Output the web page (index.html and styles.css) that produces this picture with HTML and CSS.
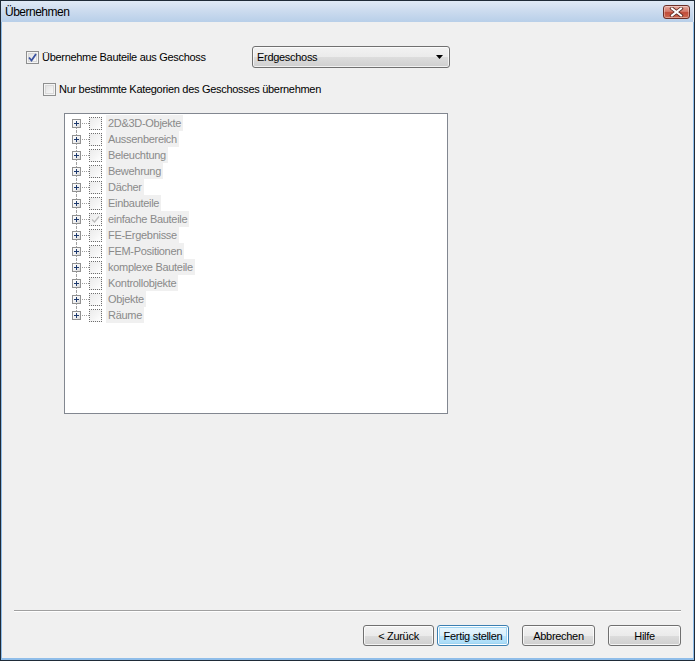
FILE: index.html
```html
<!DOCTYPE html>
<html>
<head>
<meta charset="utf-8">
<link rel="stylesheet" href="styles.css">
</head>
<body>
<div class="window">
  <div class="titlebar">
    <span class="title">Übernehmen</span>
    <div class="close">
      <svg width="15" height="10" viewBox="0 0 15 10"><path d="M3 1.5 L12 8.5 M12 1.5 L3 8.5" stroke="#5b2a24" stroke-width="3.6" stroke-linecap="square"/><path d="M3 1.5 L12 8.5 M12 1.5 L3 8.5" stroke="#ffffff" stroke-width="2" stroke-linecap="square"/></svg>
    </div>
  </div>
  <div class="content">
    <div class="row row1">
      <label class="chk-label">
        <span class="chk checked">
          <svg width="9" height="9" viewBox="0 0 9 9"><path d="M1 4.5 L3.5 7.5 L8 1" fill="none" stroke="#3a52a0" stroke-width="1.8"/></svg>
        </span>
        <span>Übernehme Bauteile aus Geschoss</span>
      </label>
      <div class="combo">
        <span class="combo-text">Erdgeschoss</span>
        <svg class="combo-arrow" width="7" height="4" viewBox="0 0 7 4"><path d="M0 0 H7 L3.5 4 Z" fill="#000"/></svg>
      </div>
    </div>
    <div class="row row2">
      <label class="chk-label">
        <span class="chk"></span>
        <span>Nur bestimmte Kategorien des Geschosses übernehmen</span>
      </label>
    </div>
    <div class="tree">
      <div class="node first"><span class="twig"><span class="exp"></span></span><span class="tcb"></span><span class="tlabel">2D&amp;3D-Objekte</span></div>
      <div class="node"><span class="twig"><span class="exp"></span></span><span class="tcb"></span><span class="tlabel">Aussenbereich</span></div>
      <div class="node"><span class="twig"><span class="exp"></span></span><span class="tcb"></span><span class="tlabel">Beleuchtung</span></div>
      <div class="node"><span class="twig"><span class="exp"></span></span><span class="tcb"></span><span class="tlabel">Bewehrung</span></div>
      <div class="node"><span class="twig"><span class="exp"></span></span><span class="tcb"></span><span class="tlabel">Dächer</span></div>
      <div class="node"><span class="twig"><span class="exp"></span></span><span class="tcb"></span><span class="tlabel">Einbauteile</span></div>
      <div class="node"><span class="twig"><span class="exp"></span></span><span class="tcb"><svg width="9" height="9" viewBox="0 0 9 9"><path d="M1 4.5 L3.5 7 L8 1.5" fill="none" stroke="#bcbcbc" stroke-width="1.2"/></svg></span><span class="tlabel">einfache Bauteile</span></div>
      <div class="node"><span class="twig"><span class="exp"></span></span><span class="tcb"></span><span class="tlabel">FE-Ergebnisse</span></div>
      <div class="node"><span class="twig"><span class="exp"></span></span><span class="tcb"></span><span class="tlabel">FEM-Positionen</span></div>
      <div class="node"><span class="twig"><span class="exp"></span></span><span class="tcb"></span><span class="tlabel">komplexe Bauteile</span></div>
      <div class="node"><span class="twig"><span class="exp"></span></span><span class="tcb"></span><span class="tlabel">Kontrollobjekte</span></div>
      <div class="node"><span class="twig"><span class="exp"></span></span><span class="tcb"></span><span class="tlabel">Objekte</span></div>
      <div class="node last"><span class="twig"><span class="exp"></span></span><span class="tcb"></span><span class="tlabel">Räume</span></div>
    </div>
    <div class="spacer"></div>
    <div class="separator"></div>
    <div class="buttons">
      <button class="btn btn-back">&lt; Zurück</button>
      <button class="btn btn-finish focused">Fertig stellen</button>
      <button class="btn gap">Abbrechen</button>
      <button class="btn gap">Hilfe</button>
    </div>
  </div>
</div>
</body>
</html>
```

FILE: styles.css
```css
html, body {
  margin: 0;
  padding: 0;
}
body {
  width: 695px;
  height: 661px;
  overflow: hidden;
  font-family: "Liberation Sans", Arial, sans-serif;
  font-size: 11px;
  letter-spacing: -0.3px;
  color: #000;
}
.window {
  box-sizing: border-box;
  width: 695px;
  height: 661px;
  border: 1px solid #1f2b38;
  background: #f0f0f0;
  display: flex;
  flex-direction: column;
}
.titlebar {
  height: 21px;
  flex: none;
  background: linear-gradient(to bottom, #e0eaf6 0%, #cddcef 45%, #b8cfe9 100%);
  display: flex;
  align-items: center;
  justify-content: space-between;
  padding: 0 3px 0 4px;
  border-right: 1px solid #dbe6f3;
}
.title {
  font-size: 12px;
  letter-spacing: -0.5px;
  color: #000;
  margin-top: 1px;
}
.close {
  box-sizing: border-box;
  width: 27px;
  height: 14px;
  margin-top: 1px;
  border: 1px solid #6b2f28;
  border-radius: 3px;
  background: linear-gradient(to bottom, #e7a99e 0%, #d37a6b 45%, #c04b38 55%, #cf6a52 100%);
  box-shadow: inset 0 0 0 1px rgba(255,255,255,0.35);
  display: flex;
  align-items: center;
  justify-content: center;
}
.close svg { display: block; }
.content {
  flex: 1;
  display: flex;
  flex-direction: column;
  border-left: 1px solid #8fbde9;
  border-right: 1px solid #8fbde9;
  border-bottom: 2px solid #8fbde9;
  min-height: 0;
}
.row {
  display: flex;
  align-items: center;
}
.row1 {
  margin-top: 24px;
  height: 22px;
  padding-left: 24px;
}
.row2 {
  margin-top: 13px;
  height: 16px;
  padding-left: 41px;
}
.chk-label {
  display: flex;
  align-items: center;
  gap: 3px;
}
.chk {
  box-sizing: border-box;
  width: 13px;
  height: 13px;
  border: 1px solid #8e8f8f;
  background: linear-gradient(135deg, #dcdcdc 0%, #f4f4f4 70%, #ffffff 100%);
  box-shadow: inset 0 0 0 1px #f4f4f4, inset 0 0 0 2px #d9d9d9;
  display: flex;
  align-items: center;
  justify-content: center;
}
.chk svg { display: block; }
.row1 .chk-label { width: 226px; }
.combo {
  box-sizing: border-box;
  width: 198px;
  height: 22px;
  border: 1px solid #707070;
  border-radius: 3px;
  background: linear-gradient(to bottom, #f2f2f2 0%, #ebebeb 50%, #dddddd 50%, #cfcfcf 100%);
  box-shadow: inset 0 0 0 1px rgba(255,255,255,0.7);
  display: flex;
  align-items: center;
  justify-content: space-between;
  padding: 0 6px 0 4px;
}
.combo-arrow { display: block; }
.tree {
  box-sizing: border-box;
  margin-top: 16px;
  margin-left: 62px;
  width: 384px;
  height: 301px;
  flex: none;
  border: 1px solid #828790;
  background: #ffffff;
  padding-top: 1px;
  color: #8a8a8a;
}
.node {
  height: 16px;
  display: flex;
  align-items: center;
  position: relative;
}
.twig {
  position: relative;
  width: 24px;
  height: 16px;
  flex: none;
}
.twig::before {
  content: "";
  position: absolute;
  left: 11px;
  top: 0;
  height: 16px;
  border-left: 1px dotted #a0a0a0;
}
.node.first .twig::before { top: 8px; height: 8px; }
.node.last .twig::before { height: 8px; }
.twig::after {
  content: "";
  position: absolute;
  left: 12px;
  top: 8px;
  width: 12px;
  border-top: 1px dotted #a0a0a0;
}
.exp {
  position: absolute;
  z-index: 1;
  box-sizing: border-box;
  left: 7px;
  top: 4px;
  width: 9px;
  height: 9px;
  border: 1px solid #919191;
  background: linear-gradient(135deg, #ffffff 0%, #f0f0f0 60%, #d6d6d6 100%);
}
.exp::before {
  content: "";
  position: absolute;
  left: 1px;
  top: 3px;
  width: 5px;
  height: 1px;
  background: #1e3a6e;
}
.exp::after {
  content: "";
  position: absolute;
  left: 3px;
  top: 1px;
  width: 1px;
  height: 5px;
  background: #1e3a6e;
}
.tcb {
  box-sizing: border-box;
  width: 13px;
  height: 13px;
  flex: none;
  border: 1px dotted #6e6e6e;
  background: linear-gradient(135deg, #ebebeb 0%, #f6f6f6 60%, #ffffff 100%);
  display: flex;
  align-items: center;
  justify-content: center;
}
.tcb svg { display: block; }
.tlabel {
  margin-left: 4px;
  height: 16px;
  line-height: 16px;
  padding: 0 2px 0 2px;
  background: #f0f0f0;
  white-space: nowrap;
}
.spacer { flex: 1; }
.separator {
  height: 1px;
  margin: 0 12px 0 12px;
  background: #a0a0a0;
  border-bottom: 1px solid #ffffff;
}
.buttons {
  display: flex;
  justify-content: flex-end;
  gap: 3px;
  margin: 13px 12px 12px 0;
}
.btn {
  box-sizing: border-box;
  width: 73px;
  height: 21px;
  padding: 0;
  font-family: "Liberation Sans", Arial, sans-serif;
  font-size: 11px;
  letter-spacing: -0.3px;
  color: #000;
  border: 1px solid #707070;
  border-radius: 3px;
  background: linear-gradient(to bottom, #f2f2f2 0%, #ebebeb 50%, #dddddd 50%, #cfcfcf 100%);
  box-shadow: inset 0 0 0 1px rgba(255,255,255,0.75);
}
.btn-back { width: 71px; }
.btn-finish { width: 72px; }
.btn.focused {
  border-color: #3c7fb1;
  background: linear-gradient(to bottom, #eaf6fd 0%, #d9f0fc 50%, #bee6fd 50%, #a7d9f5 100%);
  box-shadow: inset 0 0 0 1px #ffffff, inset 0 0 0 2px #9fd5f3;
}
.btn.gap { margin-left: 10px; }
```
